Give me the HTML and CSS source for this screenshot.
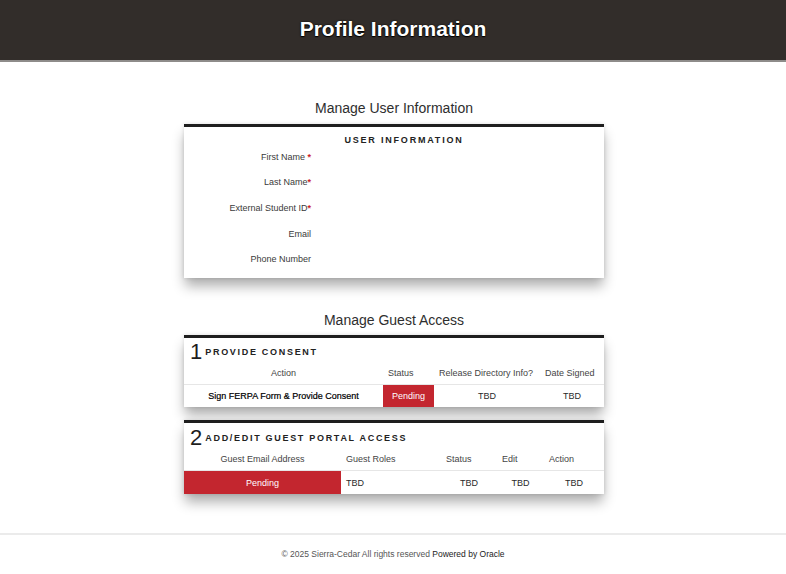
FILE: index.html
```html
<!DOCTYPE html>
<html lang="en">
<head>
<meta charset="utf-8">
<title>Profile Information</title>
<link rel="stylesheet" href="styles.css">
</head>
<body>
<header class="topbar">
  <h1 class="topbar-title">Profile Information</h1>
</header>

<main class="main">
  <h2 class="section-title">Manage User Information</h2>
  <section class="card user-card">
    <div class="card-heading">USER INFORMATION</div>
    <div class="fields">
      <div class="field-label">First Name <span class="req">*</span></div>
      <div class="field-label">Last Name<span class="req">*</span></div>
      <div class="field-label">External Student ID<span class="req">*</span></div>
      <div class="field-label">Email</div>
      <div class="field-label">Phone Number</div>
    </div>
  </section>

  <h2 class="section-title section-title-2">Manage Guest Access</h2>
  <section class="card step-card">
    <div class="step-heading"><span class="step-num">1</span><span class="step-text">PROVIDE CONSENT</span></div>
    <div class="grid grid-consent">
      <div class="th th-center">Action</div>
      <div class="th">Status</div>
      <div class="th">Release Directory Info?</div>
      <div class="th">Date Signed</div>
      <div class="td td-strong">Sign FERPA Form &amp; Provide Consent</div>
      <div class="td td-pending">Pending</div>
      <div class="td">TBD</div>
      <div class="td">TBD</div>
    </div>
  </section>

  <section class="card step-card step-card-2">
    <div class="step-heading step-heading-2"><span class="step-num">2</span><span class="step-text">ADD/EDIT GUEST PORTAL ACCESS</span></div>
    <div class="grid grid-guest">
      <div class="th th-center">Guest Email Address</div>
      <div class="th">Guest Roles</div>
      <div class="th">Status</div>
      <div class="th">Edit</div>
      <div class="th">Action</div>
      <div class="td td-pending td-tall">Pending</div>
      <div class="td td-left td-tall">TBD</div>
      <div class="td td-tall">TBD</div>
      <div class="td td-tall">TBD</div>
      <div class="td td-tall">TBD</div>
    </div>
  </section>
</main>

<footer class="footer">
  <span class="footer-muted">© 2025 Sierra-Cedar All rights reserved</span> <span class="footer-strong">Powered by Oracle</span>
</footer>
</body>
</html>
```

FILE: styles.css
```css
html, body {
  margin: 0;
  padding: 0;
  background: #ffffff;
  font-family: "Liberation Sans", Arial, sans-serif;
  color: #333;
}

.topbar {
  height: 60px;
  background: #322d2a;
  border-bottom: 2px solid #8e8c8a;
  display: flex;
  align-items: center;
  justify-content: center;
}

.topbar-title {
  margin: 0;
  font-size: 21px;
  font-weight: bold;
  color: #ffffff;
  line-height: 24px;
  text-shadow: 0 0 2px #000, 0 1px 1px #000;
  position: relative;
  top: -1px;
}

.main {
  width: 420px;
  margin-left: calc(50% - 209px);
  padding-top: 38px;
}

.section-title {
  margin: 0 0 8px;
  text-align: center;
  font-size: 14px;
  font-weight: normal;
  line-height: 16px;
  color: #2e2e2e;
}

.section-title-2 {
  margin-top: 34px;
  margin-bottom: 7px;
}

.card {
  background: #ffffff;
  border-top: 3px solid #1e1e1e;
  box-shadow: 0 9px 12px -1px rgba(0, 0, 0, 0.32), 0 0 4px rgba(0, 0, 0, 0.12);
}

.user-card {
  padding-bottom: 13px;
}

.card-heading {
  padding: 6px 0 0 20px;
  text-align: center;
  font-size: 9px;
  font-weight: bold;
  letter-spacing: 1.8px;
  line-height: 14px;
  color: #222;
}

.fields {
  display: grid;
  grid-template-columns: 127px;
  grid-auto-rows: 12px;
  row-gap: 13.65px;
  margin-top: 3.7px;
}

.field-label {
  text-align: right;
  font-size: 9px;
  line-height: 12px;
  color: #3a3a3a;
  white-space: nowrap;
}

.req {
  color: #cc1f2b;
  font-weight: bold;
}

.step-card-2 {
  margin-top: 13px;
}

.step-heading {
  display: flex;
  align-items: center;
  gap: 3px;
  padding: 3px 0 0 6px;
}

.step-heading-2 {
  padding-top: 4px;
}

.step-num {
  font-size: 22px;
  line-height: 22px;
  color: #1e1e1e;
}

.step-text {
  font-size: 9px;
  font-weight: bold;
  letter-spacing: 1.7px;
  line-height: 12px;
  color: #222;
}

.grid {
  display: grid;
}

.grid-consent {
  grid-template-columns: 199px 51px 106px 64px;
}

.grid-guest {
  grid-template-columns: 157px 100px 56px 47px 60px;
}

.th {
  padding: 4px 0 5px 5px;
  font-size: 9px;
  line-height: 12px;
  color: #444;
  white-space: nowrap;
  border-bottom: 1px solid #e6e6e6;
}

.th-center {
  padding-left: 0;
  text-align: center;
}

.td {
  height: 22px;
  display: flex;
  align-items: center;
  justify-content: center;
  font-size: 9px;
  color: #2a2a2a;
  white-space: nowrap;
}

.td-tall {
  height: 23px;
}

.td-strong {
  color: #000;
  -webkit-text-stroke: 0.2px #000;
}

.td-left {
  justify-content: flex-start;
  padding-left: 5px;
}

.td-pending {
  background: #c3262f;
  color: #ffffff;
}

.footer {
  margin-top: 39px;
  border-top: 2px solid #ebebeb;
  padding-top: 13px;
  text-align: center;
  font-size: 8.5px;
  line-height: 12px;
}

.footer-muted {
  color: #555;
}

.footer-strong {
  color: #222;
}
```
